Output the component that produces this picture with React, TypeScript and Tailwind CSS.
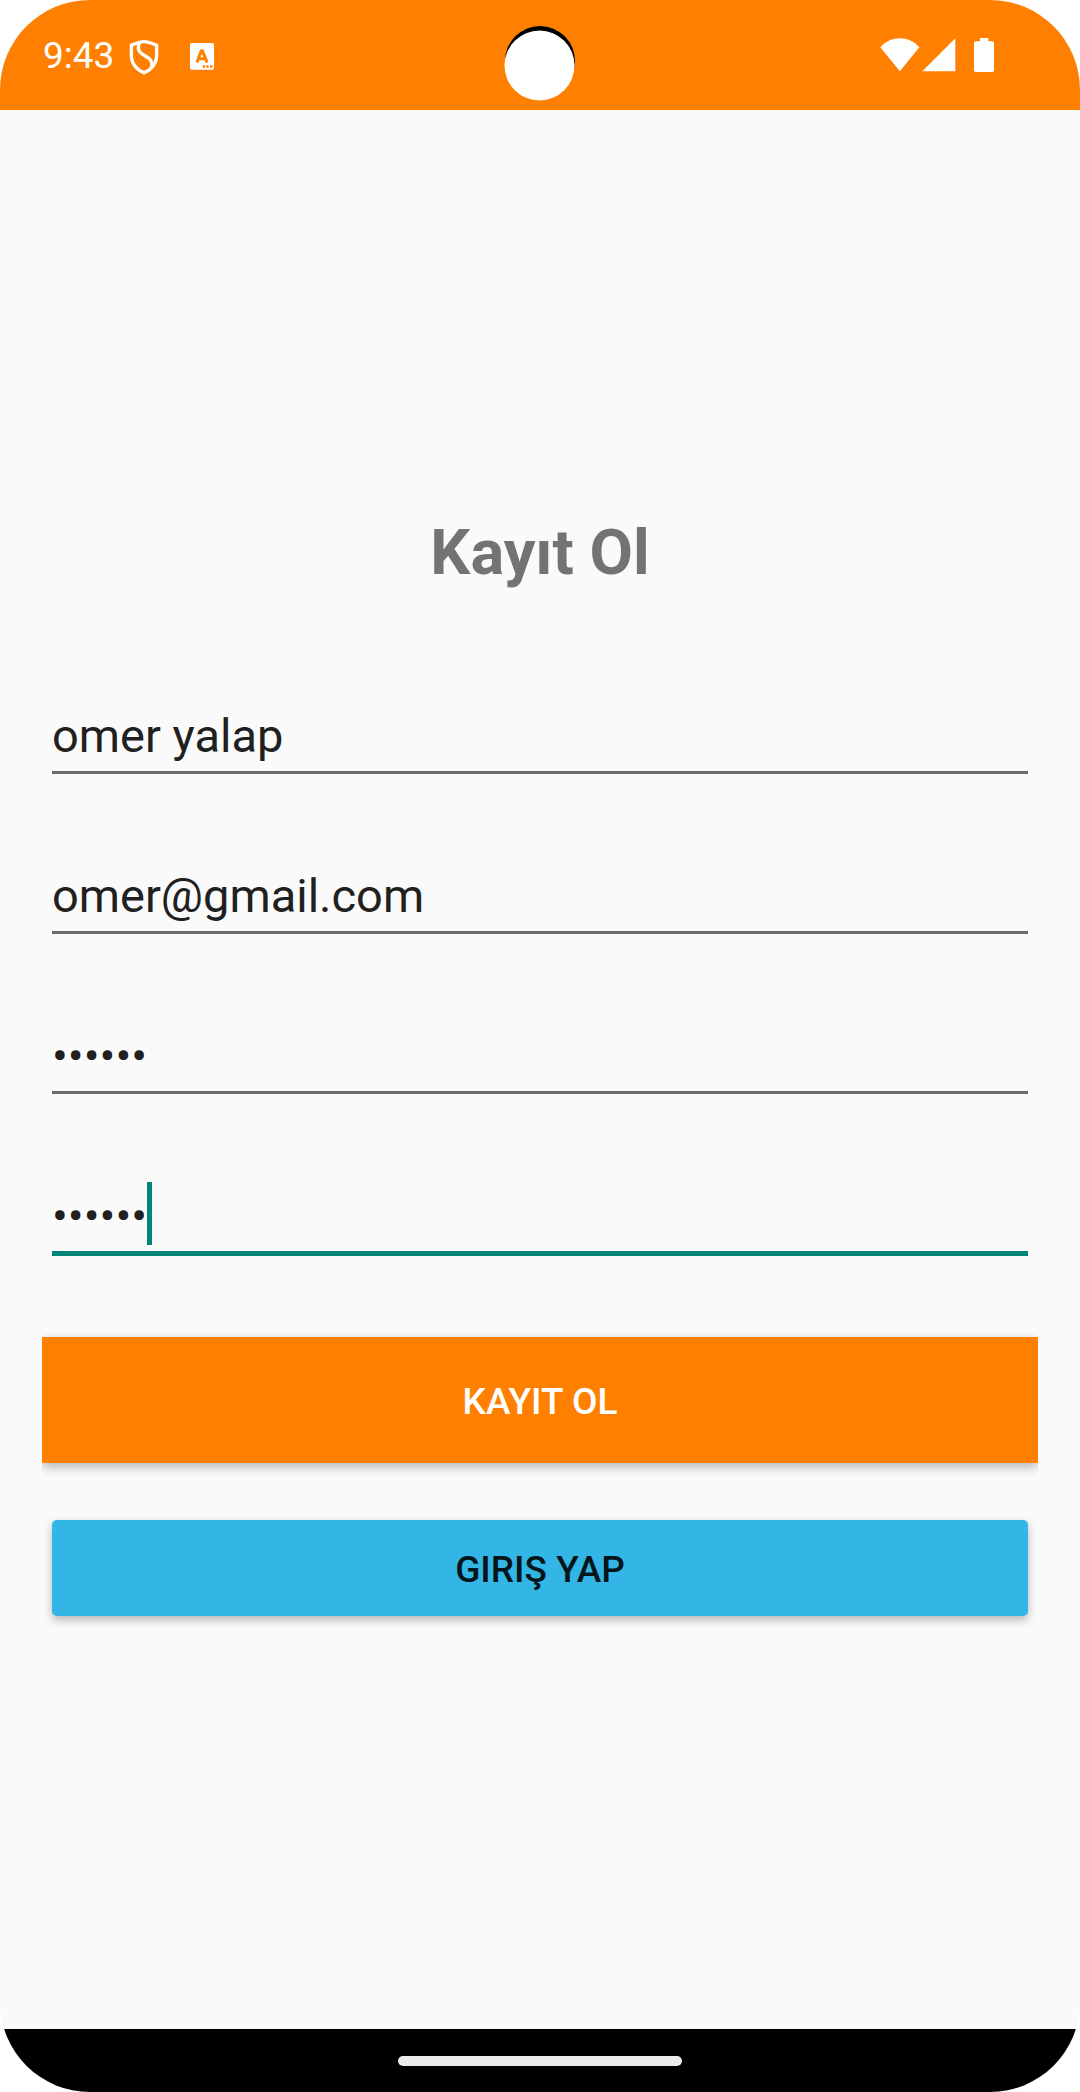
import { useState } from 'react';

function StatusBar() {
  return (
    <header className="relative flex h-[110px] shrink-0 items-center bg-[#ff8000] pl-[43px] pr-[86px] text-white">
      <time className="w-[72px] pt-[1px] text-[37px] leading-none">9:43</time>
      <svg className="ml-[14px] mt-[3px] h-[36px] w-[30px]" viewBox="388 115 90 108" fill="none" stroke="currentColor" aria-hidden="true">
        <path
          d="M433 122C421 124 406 128 395 134V162C395 187 410 208 433 216C456 208 471 187 471 162V134C460 128 445 124 433 122Z"
          strokeWidth="10"
          strokeLinejoin="round"
        />
        <path d="M419 127C411 148 420 157 437 166C451 174 459 181 456 196" strokeWidth="10" />
      </svg>
      <svg className="ml-[31px] mt-[2px] h-[27px] w-[24px]" viewBox="570 128 72 81" aria-hidden="true">
        <rect x="570" y="128" width="72" height="80" rx="5" fill="currentColor" />
        <path d="M592 183L604 151H607L620 183M597 175H614" fill="none" stroke="#ff8000" strokeWidth="9" strokeLinecap="round" strokeLinejoin="round" />
        <path d="M608 195h7v7h-7zM619 195h7v7h-7zM630 195h7v7h-7z" fill="#ff8000" />
      </svg>
      <div className="ml-auto flex items-center" aria-hidden="true">
        <svg className="h-[34px] w-[40px]" viewBox="119 113 120 102" fill="currentColor">
          <path d="M120 141C151 105 206 105 237 141L178.500 213Z" />
        </svg>
        <svg className="ml-[2px] h-[34px] w-[34px]" viewBox="245 113 102 102" fill="currentColor">
          <path d="M345 114V213H246Z" />
        </svg>
        <svg className="ml-[18px] h-[34px] w-[20px]" viewBox="402 114 60 102" fill="currentColor">
          <path d="M420 114H445V124H457Q462 124 462 129V211Q462 216 457 216H407Q402 216 402 211V129Q402 124 407 124H420Z" />
        </svg>
      </div>
      <svg className="absolute left-1/2 top-[25px] h-[76px] w-[74px] -translate-x-1/2" viewBox="503 25 74 76" aria-hidden="true">
        <circle cx="540" cy="61" r="35" fill="#000" />
        <circle cx="539.500" cy="65.500" r="35" fill="#fff" />
      </svg>
    </header>
  );
}

const fieldBase =
  'block w-full rounded-none bg-transparent p-0 pt-[52px] pb-[8px] text-[47px] leading-[55px] text-[#202020] outline-none';
const fieldIdle = 'h-[118px] border-b-[3px] border-[#6b6b6b]';
const fieldActive = 'h-[120px] border-b-[5px] border-[#008577] caret-transparent';

interface FieldProps {
  label: string;
  type: string;
  initial: string;
  active?: boolean;
}

function Field({ label, type, initial, active = false }: FieldProps) {
  const [value, setValue] = useState(initial);
  return (
    <div className="relative">
      <input
        type={type}
        aria-label={label}
        value={value}
        spellCheck={false}
        onChange={(e) => setValue(e.target.value)}
        className={`${fieldBase} ${active ? fieldActive : fieldIdle}`}
      />
      {active && <span className="absolute bottom-[11px] left-[95px] h-[63px] w-[5px] bg-[#008577]" />}
    </div>
  );
}

export default function App() {
  return (
    <div className="min-h-screen bg-white">
      <div
        className="flex min-h-screen flex-col overflow-hidden rounded-[90px] bg-[#fafafa]"
        style={{ fontFamily: 'Roboto, sans-serif' }}
      >
        <StatusBar />
        <main className="flex flex-1 flex-col justify-center px-[42px] pb-[8px]">
          <h1 className="text-center text-[63px] font-bold leading-[76px] text-[#737373]">Kayıt Ol</h1>
          <form className="mt-[65px] flex flex-col" onSubmit={(e) => e.preventDefault()}>
            <div className="flex flex-col gap-[42px] px-[10px]">
              <Field label="Ad Soyad" type="text" initial="omer yalap" />
              <Field label="E-posta" type="email" initial="omer@gmail.com" />
              <Field label="Şifre" type="password" initial="123456" />
              <Field label="Şifre Tekrar" type="password" initial="123456" active />
            </div>
            <button
              type="submit"
              className="mt-[81px] h-[126px] bg-[#ff8000] pt-[4px] text-[37px] font-medium text-white shadow-[0_4px_10px_rgba(0,0,0,0.27)] [clip-path:inset(-4px_0_-20px_0)]"
            >
              KAYIT OL
            </button>
            <button
              type="button"
              className="mx-[10px] mt-[57px] h-[96px] rounded-[5px] bg-[#33b5e5] pt-[4px] text-[37px] font-medium text-[#05161b] shadow-[0_4px_10px_rgba(0,0,0,0.27)]"
            >
              GIRIŞ YAP
            </button>
          </form>
        </main>
        <footer className="flex h-[63px] shrink-0 items-center justify-center bg-black">
          <div className="h-[10px] w-[284px] rounded-full bg-[#ebebeb]" />
        </footer>
      </div>
    </div>
  );
}
